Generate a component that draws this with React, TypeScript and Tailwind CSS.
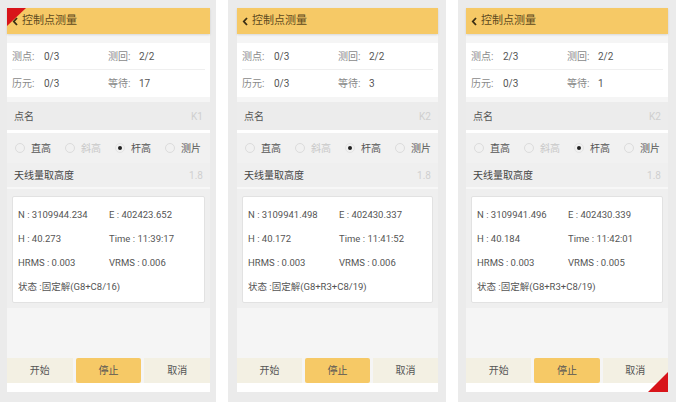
import React from 'react';

type PanelData = {
  point: string;
  epoch: string;
  round: string;
  wait: string;
  name: string;
  n: string;
  e: string;
  h: string;
  time: string;
  hrms: string;
  vrms: string;
  status: string;
  corner?: 'tl' | 'br';
  width: string;
};

const panels: PanelData[] = [
  {
    point: '0/3', epoch: '0/3', round: '2/2', wait: '17', name: 'K1',
    n: '3109944.234', e: '402423.652', h: '40.273', time: '11:39:17',
    hrms: '0.003', vrms: '0.006', status: '固定解(G8+C8/16)', corner: 'tl', width: 'w-[203px]',
  },
  {
    point: '0/3', epoch: '0/3', round: '2/2', wait: '3', name: 'K2',
    n: '3109941.498', e: '402430.337', h: '40.172', time: '11:41:52',
    hrms: '0.003', vrms: '0.006', status: '固定解(G8+R3+C8/19)', width: 'w-[201px]',
  },
  {
    point: '2/3', epoch: '0/3', round: '2/2', wait: '1', name: 'K2',
    n: '3109941.496', e: '402430.339', h: '40.184', time: '11:42:01',
    hrms: '0.003', vrms: '0.005', status: '固定解(G8+R3+C8/19)', corner: 'br', width: 'w-[202px]',
  },
];

const Radio = ({ label, state }: { label: string; state: 'off' | 'on' | 'disabled' }) => (
  <div className="w-[50px] shrink-0 flex items-center gap-[6px] whitespace-nowrap">
    {state === 'on' ? (
      <span className="w-[10px] h-[10px] shrink-0 rounded-full border border-[#e4e4e4] flex items-center justify-center">
        <span className="w-[4px] h-[4px] rounded-full bg-[#222]" />
      </span>
    ) : (
      <span className="w-[10px] h-[10px] shrink-0 rounded-full border border-[#dcdcdc]" />
    )}
    <span className={state === 'disabled' ? 'text-[#c8c8c8]' : 'text-[#555]'}>{label}</span>
  </div>
);

const Panel = ({ d }: { d: PanelData }) => (
  <div className={`${d.width} relative flex flex-col`}>
    {/* header */}
    <div className="h-[26px] bg-[#f6c966] flex items-center px-[5px] gap-[3px] shadow-[0_1px_2px_rgba(0,0,0,0.12)] z-10">
      <svg width="7" height="9" viewBox="0 0 7 9">
        <path d="M5 1 L1.8 4.5 L5 8" fill="none" stroke="#3a2e14" strokeWidth="1.8" />
      </svg>
      <span className="text-[11px] text-[#5e4a1e]">控制点测量</span>
    </div>

    <div className="bg-[#f5f5f5] flex flex-col">
      {/* stats */}
      <div className="bg-white mt-[9px] px-[5px]">
        <div className="h-[27px] flex items-center border-b border-[#efefef] text-[10px]">
          <div className="w-[96px] flex">
            <span className="w-[32px] text-[#8a8a8a]">测点:</span>
            <span className="text-[#555]">{d.point}</span>
          </div>
          <div className="flex">
            <span className="w-[31px] text-[#8a8a8a]">测回:</span>
            <span className="text-[#555]">{d.round}</span>
          </div>
        </div>
        <div className="h-[27px] flex items-center text-[10px]">
          <div className="w-[96px] flex">
            <span className="w-[32px] text-[#8a8a8a]">历元:</span>
            <span className="text-[#555]">{d.epoch}</span>
          </div>
          <div className="flex">
            <span className="w-[31px] text-[#8a8a8a]">等待:</span>
            <span className="text-[#555]">{d.wait}</span>
          </div>
        </div>
      </div>

      {/* point name */}
      <div className="mt-[5px] h-[28px] bg-[#ececec] flex items-center justify-between px-[7px] text-[10px]">
        <span className="text-[#555]">点名</span>
        <span className="text-[#cfcfcf]">{d.name}</span>
      </div>
      <div className="h-[3px] bg-white" />

      {/* radios */}
      <div className="h-[30px] bg-[#f1f1f1] flex items-center pl-[8px] text-[10px]">
        <Radio label="直高" state="off" />
        <Radio label="斜高" state="disabled" />
        <Radio label="杆高" state="on" />
        <Radio label="测片" state="off" />
      </div>

      {/* antenna */}
      <div className="h-[26px] bg-[#efefef] flex items-center justify-between px-[7px] text-[10px] border-b-2 border-[#f7f7f7]">
        <span className="text-[#444]">天线量取高度</span>
        <span className="text-[#cfcfcf]">1.8</span>
      </div>

      {/* result card */}
      <div className="bg-[#efefef] px-[5px] pt-[7px] pb-[5px]">
        <div className="bg-white border border-[#e2e2e2] rounded-[2px] h-[107px] px-[5px] pt-[11px] text-[9.5px] text-[#555] flex flex-col gap-[10px]">
          <div className="flex h-[14px] items-center">
            <span className="w-[91px]">N : {d.n}</span>
            <span>E : {d.e}</span>
          </div>
          <div className="flex h-[14px] items-center">
            <span className="w-[91px]">H : {d.h}</span>
            <span>Time : {d.time}</span>
          </div>
          <div className="flex h-[14px] items-center">
            <span className="w-[91px]">HRMS : {d.hrms}</span>
            <span>VRMS : {d.vrms}</span>
          </div>
          <div className="flex h-[14px] items-center">
            <span>状态 :{d.status}</span>
          </div>
        </div>
      </div>

      <div className="h-[50px] bg-[#f5f5f5]" />

      {/* buttons */}
      <div className="h-[25px] flex gap-[3px] text-[10px] text-[#555]">
        <div className="flex-1 bg-[#f3f0e3] flex items-center justify-center">开始</div>
        <div className="flex-1 bg-[#f6c966] rounded-[2px] flex items-center justify-center">停止</div>
        <div className="flex-1 bg-[#f3f0e3] flex items-center justify-center">取消</div>
      </div>
      <div className="h-[9px] bg-white" />
    </div>

    {d.corner === 'tl' && (
      <svg className="absolute left-0 top-0 z-20" width="19" height="18" viewBox="0 0 19 18">
        <polygon points="0,0 19,0 0,18" fill="#d8141a" />
      </svg>
    )}
    {d.corner === 'br' && (
      <svg className="absolute right-0 bottom-0 z-20" width="20" height="20" viewBox="0 0 20 20">
        <polygon points="20,0 20,20 0,20" fill="#d8141a" />
      </svg>
    )}
  </div>
);

export default function App() {
  return (
    <div
      className="w-[676px] h-[402px] overflow-hidden bg-[#ebebeb] flex"
      style={{ fontFamily: 'Roboto, "Noto Sans CJK SC", sans-serif' }}
    >
      <div className="w-[216px] pl-[7px] pt-[8px]">
        <Panel d={panels[0]} />
      </div>
      <div className="w-[12px] bg-white" />
      <div className="w-[218px] pl-[9px] pt-[8px]">
        <Panel d={panels[1]} />
      </div>
      <div className="w-[12px] bg-white" />
      <div className="w-[218px] pl-[8px] pt-[8px]">
        <Panel d={panels[2]} />
      </div>
    </div>
  );
}
